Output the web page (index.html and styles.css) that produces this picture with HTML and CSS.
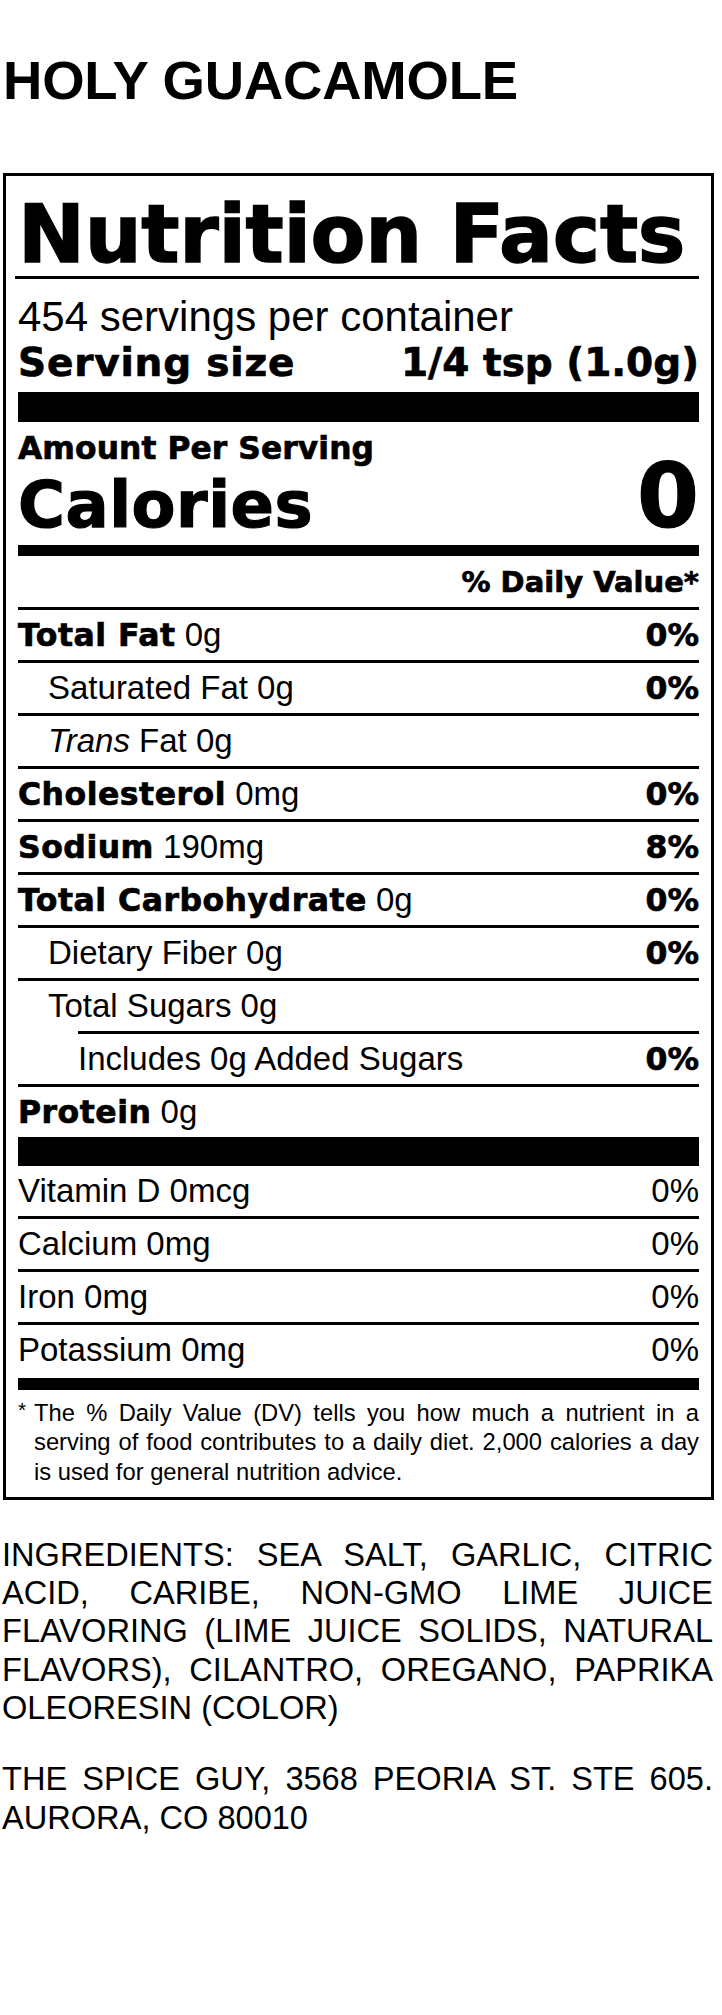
FILE: index.html
```html
<!DOCTYPE html>
<html lang="en">
<head>
<meta charset="utf-8">
<title>Holy Guacamole – Nutrition Facts</title>
<link rel="stylesheet" href="styles.css">
</head>
<body>
<div class="page">
  <h1 class="product">HOLY GUACAMOLE</h1>

  <section class="label">
    <h2 class="nf-title">Nutrition Facts</h2>
    <p class="servings">454 servings per container</p>
    <div class="serving-size"><span class="ss-label">Serving size</span><span>1/4 tsp (1.0g)</span></div>
    <div class="bar bar-thick"></div>

    <p class="amount">Amount Per Serving</p>
    <div class="calories"><span class="cal-label">Calories</span><span class="cal-value">0</span></div>
    <div class="bar bar-medium"></div>

    <p class="dv-head">% Daily Value*</p>

    <div class="row"><span class="name"><b>Total Fat</b> 0g</span><b class="dv">0%</b></div>
    <div class="row"><span class="name indent">Saturated Fat 0g</span><b class="dv">0%</b></div>
    <div class="row"><span class="name indent"><i>Trans</i> Fat 0g</span></div>
    <div class="row"><span class="name"><b>Cholesterol</b> 0mg</span><b class="dv">0%</b></div>
    <div class="row"><span class="name"><b>Sodium</b> 190mg</span><b class="dv">8%</b></div>
    <div class="row"><span class="name"><b>Total Carbohydrate</b> 0g</span><b class="dv">0%</b></div>
    <div class="row"><span class="name indent">Dietary Fiber 0g</span><b class="dv">0%</b></div>
    <div class="row"><span class="name indent">Total Sugars 0g</span></div>
    <div class="row row-sub"><span class="name">Includes 0g Added Sugars</span><b class="dv">0%</b></div>
    <div class="row"><span class="name"><b>Protein</b> 0g</span></div>

    <div class="bar bar-protein"></div>

    <div class="row row-plain"><span class="name">Vitamin D 0mcg</span><span class="dv">0%</span></div>
    <div class="row"><span class="name">Calcium 0mg</span><span class="dv">0%</span></div>
    <div class="row"><span class="name">Iron 0mg</span><span class="dv">0%</span></div>
    <div class="row"><span class="name">Potassium 0mg</span><span class="dv">0%</span></div>

    <div class="bar bar-foot"></div>

    <div class="footnote">
      <span class="ast">*</span>
      <p>The % Daily Value (DV) tells you how much a nutrient in a serving of food contributes to a daily diet. 2,000 calories a day is used for general nutrition advice.</p>
    </div>
  </section>

  <p class="ingredients">INGREDIENTS: SEA SALT, GARLIC, CITRIC ACID, CARIBE, NON-GMO LIME JUICE FLAVORING (LIME JUICE SOLIDS, NATURAL FLAVORS), CILANTRO, OREGANO, PAPRIKA OLEORESIN (COLOR)</p>
  <p class="address">THE SPICE GUY, 3568 PEORIA ST. STE 605. AURORA, CO 80010</p>
</div>
</body>
</html>
```

FILE: styles.css
```css
html, body {
  margin: 0;
  padding: 0;
  background: #fff;
  color: #000;
}

body {
  font-family: "Liberation Sans", Arial, sans-serif;
}

.page {
  width: 714px;
  padding-bottom: 40px;
}

.product {
  margin: 49px 0 0 3px;
  font-size: 54.5px;
  line-height: 64px;
  font-weight: bold;
  letter-spacing: -0.2px;
}

/* ---------- label box ---------- */
.label {
  margin: 60px 0 0 3px;
  width: 711px;
  box-sizing: border-box;
  border: 3px solid #000;
  padding: 0 12px 11px 12px;
}

.label b,
.nf-title,
.serving-size,
.amount,
.calories,
.dv-head {
  font-family: "DejaVu Sans", Verdana, sans-serif;
  font-weight: bold;
  -webkit-text-stroke: 0.7px #000;
}

.nf-title {
  margin: 18px 0 0 -3px;
  padding-left: 3px;
  font-size: 80px;
  line-height: 82px;
  letter-spacing: -0.3px;
  border-bottom: 3px solid #000;
  -webkit-text-stroke: 1.4px #000;
}

.servings {
  margin: 0;
  padding-top: 16px;
  font-size: 42px;
  line-height: 44px;
}

.serving-size {
  display: flex;
  justify-content: space-between;
  margin-top: 4px;
  font-size: 39px;
  line-height: 40px;
}

.ss-label {
  letter-spacing: 0.8px;
}

.bar {
  background: #000;
}

.bar-thick {
  margin-top: 9px;
  height: 30px;
}

.amount {
  margin: 9px 0 0 0;
  font-size: 31.3px;
  line-height: 34px;
  letter-spacing: 0.1px;
}

.calories {
  display: flex;
  justify-content: space-between;
  align-items: baseline;
  margin-top: 1px;
  height: 69px;
  line-height: 60px;
  -webkit-text-stroke: 1.2px #000;
}

.cal-label {
  font-size: 64px;
  letter-spacing: 0.5px;
}

.cal-value {
  font-size: 89px;
}

.bar-medium {
  margin-top: 10px;
  height: 11px;
}

.dv-head {
  margin: 0;
  padding: 10px 0 9px 0;
  text-align: right;
  font-size: 29px;
  line-height: 32px;
}

/* ---------- nutrient rows ---------- */
.row {
  display: flex;
  justify-content: space-between;
  align-items: baseline;
  box-sizing: border-box;
  height: 53px;
  border-top: 3px solid #000;
  font-size: 33px;
  line-height: 50px;
  white-space: nowrap;
}

.row b {
  font-size: 31.5px;
  letter-spacing: 0.5px;
}

.row b.dv {
  letter-spacing: 0;
}

.row .indent {
  padding-left: 30px;
}

.row-sub {
  margin-left: 60px;
}

.row-plain {
  border-top: none;
  height: 50px;
}

.bar-protein {
  height: 29px;
}

.bar-foot {
  margin-top: 3px;
  height: 12px;
}

/* ---------- footnote ---------- */
.footnote {
  display: flex;
  align-items: flex-start;
  margin-top: 8px;
}

.ast {
  flex: none;
  width: 16px;
  font-size: 21px;
  line-height: 24px;
}

.footnote p {
  flex: 1;
  margin: 0;
  font-size: 23.75px;
  line-height: 29.3px;
  text-align: justify;
}

/* ---------- ingredients ---------- */
.ingredients,
.address {
  margin: 0;
  padding: 0 1px 0 2px;
  font-size: 32.6px;
  line-height: 38.3px;
  text-align: justify;
}

.ingredients {
  margin-top: 36px;
}

.address {
  margin-top: 33px;
}
```
